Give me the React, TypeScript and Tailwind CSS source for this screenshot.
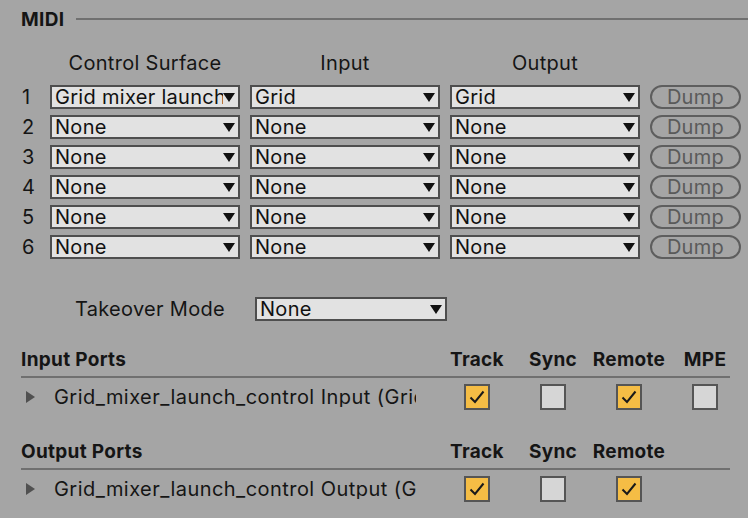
import React from 'react';

const ROWS = [
  { n: 1, surface: 'Grid mixer launch_control', input: 'Grid', output: 'Grid' },
  { n: 2, surface: 'None', input: 'None', output: 'None' },
  { n: 3, surface: 'None', input: 'None', output: 'None' },
  { n: 4, surface: 'None', input: 'None', output: 'None' },
  { n: 5, surface: 'None', input: 'None', output: 'None' },
  { n: 6, surface: 'None', input: 'None', output: 'None' },
];

function Chooser({ value, width = 'w-[190px]' }: { value: string; width?: string }) {
  return (
    <div className={`${width} h-[24px] flex items-center border-2 border-[#4e4e4e] bg-[#e2e2e2] pl-[3px] pr-[3px]`}>
      <span className="flex-1 overflow-hidden whitespace-nowrap text-[20px] tracking-[0.3px] leading-none text-[#111]">
        {value}
      </span>
      <svg width="12" height="9" viewBox="0 0 12 9" className="shrink-0">
        <path d="M0 0 H12 L6 9 Z" fill="#111" />
      </svg>
    </div>
  );
}

function Check({ on }: { on: boolean }) {
  return (
    <div
      className={`w-[26px] h-[26px] border-2 border-[#555] flex items-center justify-center ${
        on ? 'bg-[#f5bd45]' : 'bg-[#d6d6d6]'
      }`}
    >
      {on && (
        <svg width="18" height="16" viewBox="0 0 18 16">
          <path d="M2.5 8.5 L7 13 L15.5 2.5" fill="none" stroke="#1a1a1a" strokeWidth="2" />
        </svg>
      )}
    </div>
  );
}

function PortSection({
  title,
  port,
  cols,
}: {
  title: string;
  port: string;
  cols: { label: string; on: boolean }[];
}) {
  return (
    <div className="flex flex-col">
      <div className="grid grid-cols-[418px_76px_76px_76px_76px] h-[24px] items-center">
        <span className="font-bold text-[19px] tracking-[0.3px] leading-none">{title}</span>
        {cols.map((c) => (
          <span key={c.label} className="text-center font-bold text-[19px] tracking-[0.3px] leading-none">
            {c.label}
          </span>
        ))}
      </div>
      <div className="w-[709px] h-[2px] bg-[#707070] mt-[5px]" />
      <div className="grid grid-cols-[418px_76px_76px_76px_76px] h-[26px] items-center mt-[6px]">
        <div className="flex items-center">
          <svg width="9" height="12" viewBox="0 0 9 12" className="ml-[5px] shrink-0">
            <path d="M0 0 L9 6 L0 12 Z" fill="#505050" />
          </svg>
          <span className="ml-[19px] w-[362px] overflow-hidden whitespace-nowrap text-[20px] tracking-[0.45px] leading-none">
            {port}
          </span>
        </div>
        {cols.map((c) => (
          <div key={c.label} className="flex justify-center">
            <Check on={c.on} />
          </div>
        ))}
      </div>
    </div>
  );
}

export default function App() {
  return (
    <div
      className="w-[748px] h-[518px] overflow-hidden bg-[#a5a5a5] text-[#151515] pl-[21px] pt-[7px]"
      style={{ fontFamily: 'Inter, "Open Sans", sans-serif' }}
    >
      {/* MIDI header */}
      <div className="flex items-center h-[24px]">
        <span className="font-bold text-[19px] tracking-[0.3px] leading-none">MIDI</span>
        <div className="flex-1 h-[2px] bg-[#707070] ml-[12px]" />
      </div>

      {/* Control surface table */}
      <div className="grid grid-cols-[19px_190px_190px_190px_91px] gap-x-[10px] mt-[20px] mb-[10px]">
        <div />
        <div className="text-center text-[20px] tracking-[0.3px] leading-[24px]">Control Surface</div>
        <div className="text-center text-[20px] tracking-[0.3px] leading-[24px]">Input</div>
        <div className="text-center text-[20px] tracking-[0.3px] leading-[24px]">Output</div>
        <div />
      </div>
      <div className="grid grid-cols-[19px_190px_190px_190px_91px] gap-x-[10px] gap-y-[6px]">
        {ROWS.map((r) => (
          <React.Fragment key={r.n}>
            <div className="text-[20px] leading-[24px] pl-[1px]">{r.n}</div>
            <Chooser value={r.surface} />
            <Chooser value={r.input} />
            <Chooser value={r.output} />
            <div className="h-[24px] rounded-full border-2 border-[#5e5e5e] flex items-center justify-center text-[20px] tracking-[0.3px] leading-none text-[#5a5a5a]">
              Dump
            </div>
          </React.Fragment>
        ))}
      </div>

      {/* Takeover */}
      <div className="flex items-center h-[24px] mt-[38px]">
        <span className="ml-[54px] w-[180px] text-[20px] tracking-[0.3px] leading-none">Takeover Mode</span>
        <Chooser value="None" width="w-[192px]" />
      </div>

      <div className="mt-[26px]">
        <PortSection
          title="Input Ports"
          port="Grid_mixer_launch_control Input (Grid)"
          cols={[
            { label: 'Track', on: true },
            { label: 'Sync', on: false },
            { label: 'Remote', on: true },
            { label: 'MPE', on: false },
          ]}
        />
      </div>

      <div className="mt-[29px]">
        <PortSection
          title="Output Ports"
          port="Grid_mixer_launch_control Output (Grid)"
          cols={[
            { label: 'Track', on: true },
            { label: 'Sync', on: false },
            { label: 'Remote', on: true },
          ]}
        />
      </div>
    </div>
  );
}
